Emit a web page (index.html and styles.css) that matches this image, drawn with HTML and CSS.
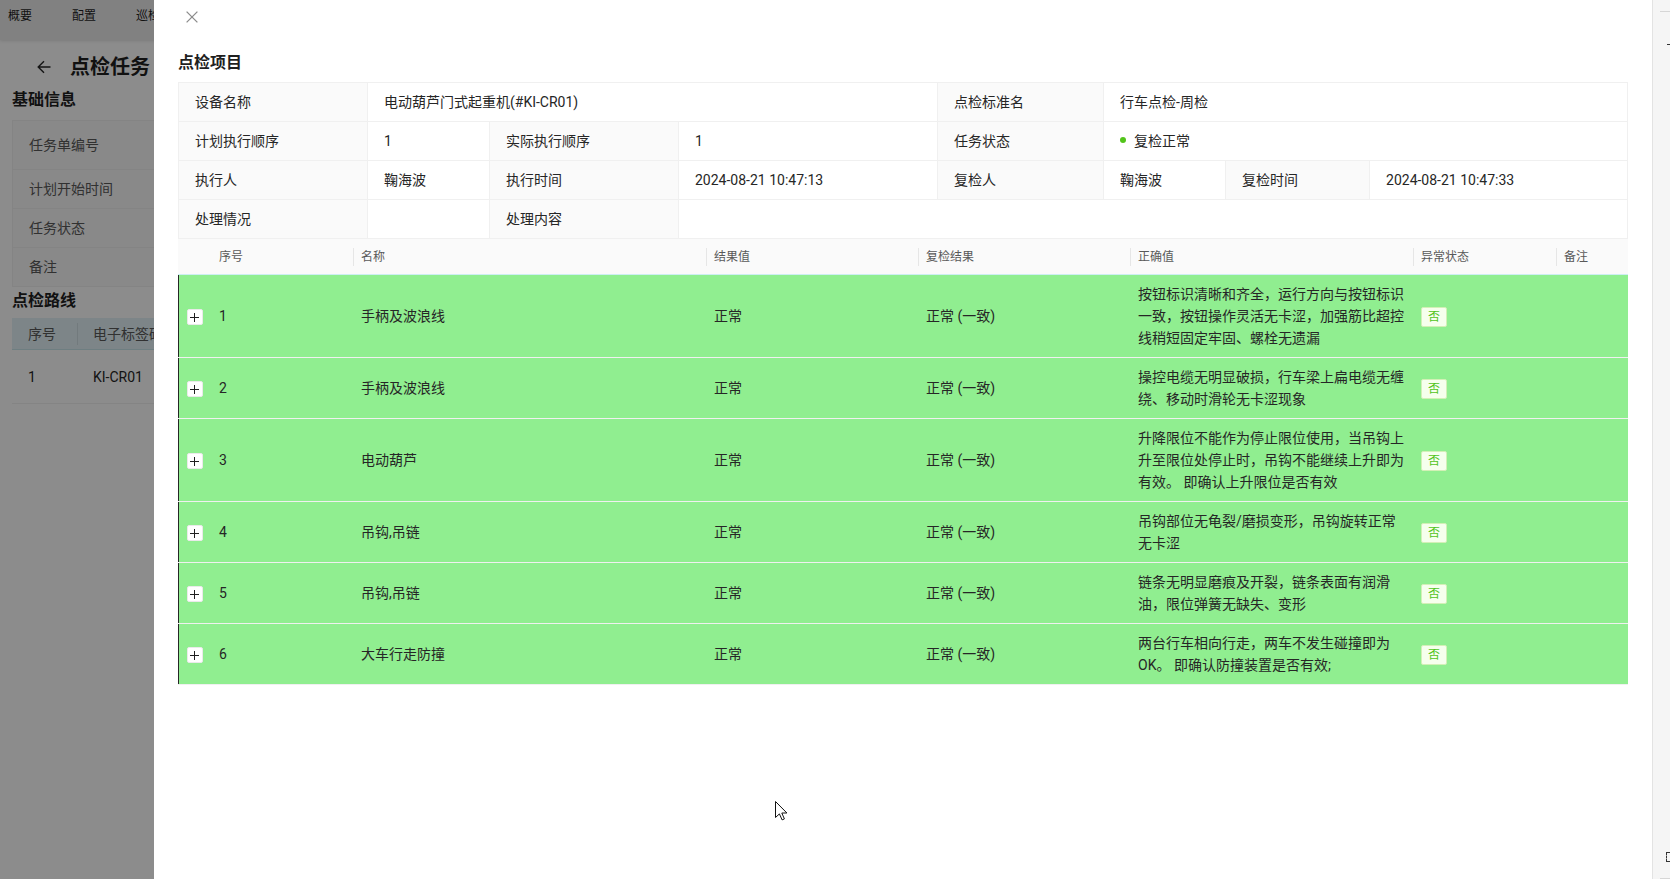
FILE: index.html
```html
<!DOCTYPE html>
<html lang="zh-CN">
<head>
<meta charset="utf-8">
<title>点检任务</title>
<link rel="stylesheet" href="styles.css">
</head>
<body>
<div class="page">
  <nav class="topnav">
    <span class="nav-item">概要</span>
    <span class="nav-item">配置</span>
    <span class="nav-item">巡检</span>
  </nav>
  <main class="page-body">
    <div class="page-head">
      <svg class="back" viewBox="0 0 14 14" width="14" height="14"><path d="M13.5 7H1.2M7 1.2 1.2 7 7 12.8" fill="none" stroke="#262626" stroke-width="1.4"/></svg>
      <h1 class="page-title">点检任务</h1>
    </div>
    <h2 class="section-title">基础信息</h2>
    <table class="pdesc">
      <tr class="tall"><th>任务单编号</th><td></td></tr>
      <tr><th>计划开始时间</th><td></td></tr>
      <tr><th>任务状态</th><td></td></tr>
      <tr><th>备注</th><td></td></tr>
    </table>
    <h2 class="section-title route">点检路线</h2>
    <table class="ptable">
      <thead><tr><th class="c1">序号</th><th class="c2">电子标签码</th><th></th></tr></thead>
      <tbody><tr><td>1</td><td>KI-CR01</td><td></td></tr></tbody>
    </table>
  </main>
</div>

<div class="mask"></div>

<aside class="drawer">
  <div class="drawer-main">
    <div class="drawer-header">
      <span class="close" aria-label="关闭">
        <svg viewBox="0 0 12 12" width="12" height="12"><path d="M0.6 0.6 11.4 11.4M11.4 0.6 0.6 11.4" fill="none" stroke="#8c8c8c" stroke-width="1.3"/></svg>
      </span>
    </div>
    <div class="drawer-body">
      <h3 class="block-title">点检项目</h3>
      <table class="desc">
        <colgroup>
          <col class="w189"><col class="w122"><col class="w189"><col class="w259">
          <col class="w166"><col class="w122"><col class="w144"><col class="w258">
        </colgroup>
        <tr><th>设备名称</th><td colspan="3">电动葫芦门式起重机(#KI-CR01)</td><th>点检标准名</th><td colspan="3">行车点检-周检</td></tr>
        <tr><th>计划执行顺序</th><td>1</td><th>实际执行顺序</th><td>1</td><th>任务状态</th><td colspan="3"><span class="dot"></span>复检正常</td></tr>
        <tr><th>执行人</th><td>鞠海波</td><th>执行时间</th><td>2024-08-21 10:47:13</td><th>复检人</th><td>鞠海波</td><th>复检时间</th><td>2024-08-21 10:47:33</td></tr>
        <tr><th>处理情况</th><td></td><th>处理内容</th><td colspan="5"></td></tr>
      </table>

      <table class="items">
        <colgroup>
          <col class="w33"><col class="w142"><col class="w353"><col class="w212">
          <col class="w212"><col class="w283"><col class="w143"><col class="w72">
        </colgroup>
        <thead>
          <tr><th class="expand-col"></th><th>序号</th><th class="sep">名称</th><th class="sep">结果值</th><th class="sep">复检结果</th><th class="sep">正确值</th><th class="sep">异常状态</th><th class="sep">备注</th></tr>
        </thead>
        <tbody>
          <tr>
            <td class="expand-col"><span class="expand-btn"><svg viewBox="0 0 9 9" width="9" height="9"><path d="M0 4.5H9M4.5 0V9" stroke="#1f1f1f" stroke-width="1"/></svg></span></td>
            <td>1</td><td>手柄及波浪线</td><td>正常</td><td>正常 (一致)</td>
            <td>按钮标识清晰和齐全，运行方向与按钮标识一致，按钮操作灵活无卡涩，加强筋比超控线稍短固定牢固、螺栓无遗漏</td>
            <td><span class="tag">否</span></td><td></td>
          </tr>
          <tr>
            <td class="expand-col"><span class="expand-btn"><svg viewBox="0 0 9 9" width="9" height="9"><path d="M0 4.5H9M4.5 0V9" stroke="#1f1f1f" stroke-width="1"/></svg></span></td>
            <td>2</td><td>手柄及波浪线</td><td>正常</td><td>正常 (一致)</td>
            <td>操控电缆无明显破损，行车梁上扁电缆无缠绕、移动时滑轮无卡涩现象</td>
            <td><span class="tag">否</span></td><td></td>
          </tr>
          <tr>
            <td class="expand-col"><span class="expand-btn"><svg viewBox="0 0 9 9" width="9" height="9"><path d="M0 4.5H9M4.5 0V9" stroke="#1f1f1f" stroke-width="1"/></svg></span></td>
            <td>3</td><td>电动葫芦</td><td>正常</td><td>正常 (一致)</td>
            <td>升降限位不能作为停止限位使用，当吊钩上升至限位处停止时，吊钩不能继续上升即为有效。 即确认上升限位是否有效</td>
            <td><span class="tag">否</span></td><td></td>
          </tr>
          <tr>
            <td class="expand-col"><span class="expand-btn"><svg viewBox="0 0 9 9" width="9" height="9"><path d="M0 4.5H9M4.5 0V9" stroke="#1f1f1f" stroke-width="1"/></svg></span></td>
            <td>4</td><td>吊钩,吊链</td><td>正常</td><td>正常 (一致)</td>
            <td>吊钩部位无龟裂/磨损变形，吊钩旋转正常无卡涩</td>
            <td><span class="tag">否</span></td><td></td>
          </tr>
          <tr>
            <td class="expand-col"><span class="expand-btn"><svg viewBox="0 0 9 9" width="9" height="9"><path d="M0 4.5H9M4.5 0V9" stroke="#1f1f1f" stroke-width="1"/></svg></span></td>
            <td>5</td><td>吊钩,吊链</td><td>正常</td><td>正常 (一致)</td>
            <td>链条无明显磨痕及开裂，链条表面有润滑油，限位弹簧无缺失、变形</td>
            <td><span class="tag">否</span></td><td></td>
          </tr>
          <tr>
            <td class="expand-col"><span class="expand-btn"><svg viewBox="0 0 9 9" width="9" height="9"><path d="M0 4.5H9M4.5 0V9" stroke="#1f1f1f" stroke-width="1"/></svg></span></td>
            <td>6</td><td>大车行走防撞</td><td>正常</td><td>正常 (一致)</td>
            <td>两台行车相向行走，两车不发生碰撞即为OK。 即确认防撞装置是否有效;</td>
            <td><span class="tag">否</span></td><td></td>
          </tr>
        </tbody>
      </table>
    </div>
  </div>
  <div class="side-strip">
    <span class="strip-line"></span>
    <span class="strip-tick"></span>
    <span class="strip-glyph"></span>
    <span class="strip-line bottom"></span>
  </div>
</aside>

<svg class="cursor" viewBox="0 0 13 20" width="13" height="20"><path d="M0.5 0.5V16.5L4.4 12.9L7.1 18.9L9.4 17.9L6.8 12H11.9Z" fill="#fff" stroke="#111" stroke-width="1" stroke-linejoin="round"/></svg>
</body>
</html>
```

FILE: styles.css
```css
* { box-sizing: border-box; }

html, body {
  margin: 0;
  width: 1670px;
  height: 879px;
  overflow: hidden;
}

body {
  font-family: "Segoe UI", Roboto, "Noto Sans CJK SC", sans-serif;
  font-size: 14px;
  color: #262626;
  background: #fff;
}

/* ---------- background page (under mask) ---------- */
.page {
  width: 1670px;
  height: 879px;
  background: #fff;
}

.topnav {
  display: flex;
  gap: 40px;
  height: 40px;
  padding-left: 8px;
  background: #ebebeb;
  box-shadow: 0 1px 3px rgba(0, 0, 0, 0.12);
}

.nav-item {
  font-size: 12px;
  line-height: 33px;
  color: #1f1f1f;
}

.page-body {
  padding-left: 12px;
  width: 1000px;
}

.page-head {
  display: flex;
  align-items: center;
  gap: 19px;
  padding-left: 25px;
  margin-top: 13px;
  height: 28px;
}

.back { display: block; }

.page-title {
  margin: 0;
  font-size: 20px;
  line-height: 28px;
  font-weight: 700;
  color: #1f1f1f;
}

.section-title {
  margin: 7px 0 8px;
  font-size: 16px;
  line-height: 24px;
  font-weight: 700;
  color: #1f1f1f;
}

.section-title.route { margin: 2px 0 5px; }

.pdesc {
  width: 900px;
  border-collapse: separate;
  border-spacing: 0;
  border-top: 1px solid #f0f0f0;
  border-left: 1px solid #f0f0f0;
}

.pdesc th,
.pdesc td {
  padding: 8px 16px;
  line-height: 22px;
  font-size: 14px;
  text-align: left;
  font-weight: 400;
  border-right: 1px solid #f0f0f0;
  border-bottom: 1px solid #f0f0f0;
}

.pdesc th { width: 200px; background: #fafafa; color: #595959; }
.pdesc .tall th,
.pdesc .tall td { padding: 13px 16px; }

.ptable {
  width: 900px;
  border-collapse: separate;
  border-spacing: 0;
  table-layout: fixed;
}

.ptable th {
  padding: 5px 16px 4px;
  line-height: 22px;
  font-weight: 400;
  font-size: 14px;
  text-align: left;
  color: #595959;
  background: #e3f3f7 linear-gradient(#cfdfe3, #cfdfe3) no-repeat left center / 1px 22px;
  border-bottom: 1px solid #c9e5ec;
}

.ptable th.c1 { width: 65px; background-image: none; }
.ptable th.c2 { width: 150px; }

.ptable td {
  padding: 16px 16px 15px;
  line-height: 22px;
  border-bottom: 1px solid #f0f0f0;
}

/* ---------- mask ---------- */
.mask {
  position: fixed;
  inset: 0;
  background: rgba(0, 0, 0, 0.45);
}

/* ---------- drawer ---------- */
.drawer {
  position: fixed;
  top: 0;
  bottom: 0;
  left: 154px;
  right: 0;
  display: flex;
}

.drawer-main {
  flex: 1;
  background: #fff;
}

.drawer-header {
  height: 34px;
  padding-left: 32px;
  display: flex;
  align-items: center;
}

.close { display: flex; }

.drawer-body { padding: 0 24px; }

.block-title {
  margin: 0 0 7px;
  padding-top: 17px;
  font-size: 16px;
  line-height: 24px;
  font-weight: 700;
  color: #1f1f1f;
}

.w33 { width: 33px; }
.w72 { width: 72px; }
.w122 { width: 122px; }
.w142 { width: 142px; }
.w143 { width: 143px; }
.w144 { width: 144px; }
.w166 { width: 166px; }
.w189 { width: 189px; }
.w212 { width: 212px; }
.w258 { width: 258px; }
.w259 { width: 259px; }
.w283 { width: 283px; }
.w353 { width: 353px; }

.desc {
  width: 1450px;
  table-layout: fixed;
  border-collapse: separate;
  border-spacing: 0;
  border-top: 1px solid #f0f0f0;
  border-left: 1px solid #f0f0f0;
}

.desc th,
.desc td {
  padding: 8px 16px;
  font-size: 14px;
  line-height: 22px;
  text-align: left;
  font-weight: 400;
  color: #262626;
  border-right: 1px solid #f0f0f0;
  border-bottom: 1px solid #f0f0f0;
}

.desc th { background: #fafafa; }

.dot {
  display: inline-block;
  width: 6px;
  height: 6px;
  border-radius: 50%;
  background: #52c41a;
  margin-right: 8px;
  vertical-align: 3px;
}

.items {
  width: 1450px;
  table-layout: fixed;
  border-collapse: separate;
  border-spacing: 0;
}

.items th {
  padding: 8px 8px 7px;
  font-size: 12px;
  line-height: 20px;
  font-weight: 400;
  text-align: left;
  color: #595959;
  background: #fafafa;
  border-bottom: 1px solid #cdeef3;
}

.items th.sep {
  background: #fafafa linear-gradient(#e6e6e6, #e6e6e6) no-repeat left center / 1px 18px;
}

.items td {
  padding: 8px;
  font-size: 14px;
  line-height: 22px;
  color: #262626;
  background: #90ee90;
  vertical-align: middle;
  border-bottom: 1px solid #f0f0f0;
}

.items td.expand-col {
  padding: 8px 0;
  text-align: center;
  box-shadow: inset 1px 0 0 #262626;
}

.expand-btn {
  display: inline-flex;
  align-items: center;
  justify-content: center;
  width: 16px;
  height: 16px;
  background: #fff;
  border: 1px solid #eaeaea;
  border-radius: 2px;
  vertical-align: middle;
}

.tag {
  display: inline-block;
  padding: 0 6px;
  font-size: 12px;
  line-height: 18px;
  color: #52c41a;
  background: #f6ffed;
  border: 1px solid #d3f0b6;
  border-radius: 2px;
  vertical-align: middle;
}

/* ---------- right strip ---------- */
.side-strip {
  width: 18px;
  background: #f5f5f5;
  border-left: 1px solid #e3e3e3;
  display: flex;
  flex-direction: column;
  align-items: flex-end;
}

.strip-line {
  display: block;
  width: 10px;
  height: 1px;
  margin-top: 11px;
  background: #d6d6d6;
}

.strip-line.bottom { margin-top: 16px; }

.strip-tick {
  display: block;
  width: 3px;
  height: 1px;
  margin-top: 32px;
  background: #333;
}

.strip-glyph {
  display: block;
  width: 4px;
  height: 10px;
  margin-top: auto;
  border: 1px dashed #333;
  border-right: 0;
}

.cursor {
  position: fixed;
  left: 775px;
  top: 801px;
}
```
